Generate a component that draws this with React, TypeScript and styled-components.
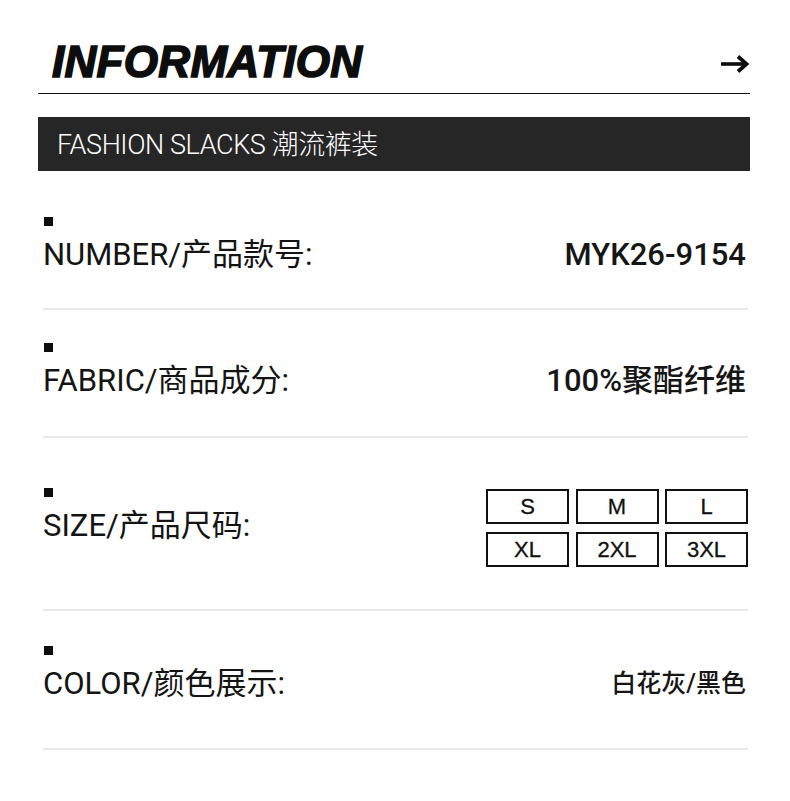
import React from "react";
import styled, { createGlobalStyle } from "styled-components";

const Global = createGlobalStyle`
  html, body { margin: 0; padding: 0; background: #ffffff; }
  body { font-family: Roboto, "Noto Sans CJK SC", sans-serif; color: #111111; }
  * { box-sizing: border-box; }
`;

const Page = styled.div`
  width: 790px;
  padding: 0 40px 50px 38px;
  background: #ffffff;
`;

const Header = styled.header`
  display: flex;
  align-items: center;
  justify-content: space-between;
  padding: 40px 0 9px 14px;
  border-bottom: 1.5px solid #111111;
`;

const Title = styled.h1`
  margin: 0;
  font-family: "Liberation Sans", Arial, sans-serif;
  font-size: 44px;
  line-height: 44px;
  font-weight: 700;
  font-style: italic;
  letter-spacing: 0.3px;
  color: #0d0d0d;
  -webkit-text-stroke: 1.6px #0d0d0d;
`;

const ArrowWrap = styled.span`
  display: flex;
  margin-top: 4px;
`;

const Bar = styled.div`
  margin-top: 23px;
  height: 54px;
  background: #262626;
  color: #ffffff;
  display: flex;
  align-items: center;
  padding: 0 0 4px 19px;
  font-family: Roboto, "Noto Sans CJK SC", sans-serif;
  font-weight: 300;
  font-size: 27px;
  letter-spacing: -0.4px;
`;

const List = styled.div`
  margin: 0 2px 0 5px;
`;

const Row = styled.div<{ $pt: number; $pb: number; $align: string }>`
  display: flex;
  justify-content: space-between;
  align-items: ${(p) => p.$align};
  padding-top: ${(p) => p.$pt}px;
  padding-bottom: ${(p) => p.$pb}px;
  border-bottom: 2px solid #e8e8e8;
`;

const Left = styled.div`
  display: flex;
  flex-direction: column;
  align-items: flex-start;
`;

const Bullet = styled.span`
  width: 9px;
  height: 9px;
  margin-left: 1px;
  margin-bottom: 11px;
  background: #0d0d0d;
`;

const Label = styled.span`
  font-size: 31px;
  line-height: 36px;
  font-weight: 400;
  color: #141414;
`;

const Value = styled.span<{ $size: number }>`
  font-size: ${(p) => p.$size}px;
  line-height: 36px;
  font-weight: 500;
  color: #161616;
  margin-right: 2px;
`;

const SizeGrid = styled.div`
  display: grid;
  grid-template-columns: repeat(3, 83px);
  grid-auto-rows: 35px;
  column-gap: 6.5px;
  row-gap: 8px;
  margin-top: 1px;
`;

const SizeBox = styled.div`
  border: 2px solid #111111;
  display: flex;
  align-items: center;
  justify-content: center;
  font-family: "Liberation Sans", Arial, sans-serif;
  font-size: 22px;
  color: #111111;
  -webkit-text-stroke: 0.3px #111111;
`;

const Arrow = () => (
  <svg width="30" height="20" viewBox="0 0 30 20" fill="none">
    <path d="M1 10 H26" stroke="#0d0d0d" strokeWidth="3.6" />
    <path d="M18 2.5 L26.5 10 L18 17.5" stroke="#0d0d0d" strokeWidth="3.8" strokeLinejoin="miter" />
  </svg>
);

const sizes = ["S", "M", "L", "XL", "2XL", "3XL"];

export default function App() {
  return (
    <Page>
      <Global />
      <Header>
        <Title>INFORMATION</Title>
        <ArrowWrap>
          <Arrow />
        </ArrowWrap>
      </Header>
      <Bar>FASHION SLACKS 潮流裤装</Bar>
      <List>
        <Row $pt={46} $pb={35} $align="flex-end">
          <Left>
            <Bullet />
            <Label>NUMBER/产品款号:</Label>
          </Left>
          <Value $size={31}>MYK26-9154</Value>
        </Row>
        <Row $pt={33} $pb={37} $align="flex-end">
          <Left>
            <Bullet />
            <Label>FABRIC/商品成分:</Label>
          </Left>
          <Value $size={31}>100%聚酯纤维</Value>
        </Row>
        <Row $pt={50} $pb={42} $align="flex-start">
          <Left>
            <Bullet />
            <Label>SIZE/产品尺码:</Label>
          </Left>
          <SizeGrid>
            {sizes.map((s) => (
              <SizeBox key={s}>{s}</SizeBox>
            ))}
          </SizeGrid>
        </Row>
        <Row $pt={35} $pb={46} $align="flex-end">
          <Left>
            <Bullet />
            <Label>COLOR/颜色展示:</Label>
          </Left>
          <Value $size={25}>白花灰/黑色</Value>
        </Row>
      </List>
    </Page>
  );
}
